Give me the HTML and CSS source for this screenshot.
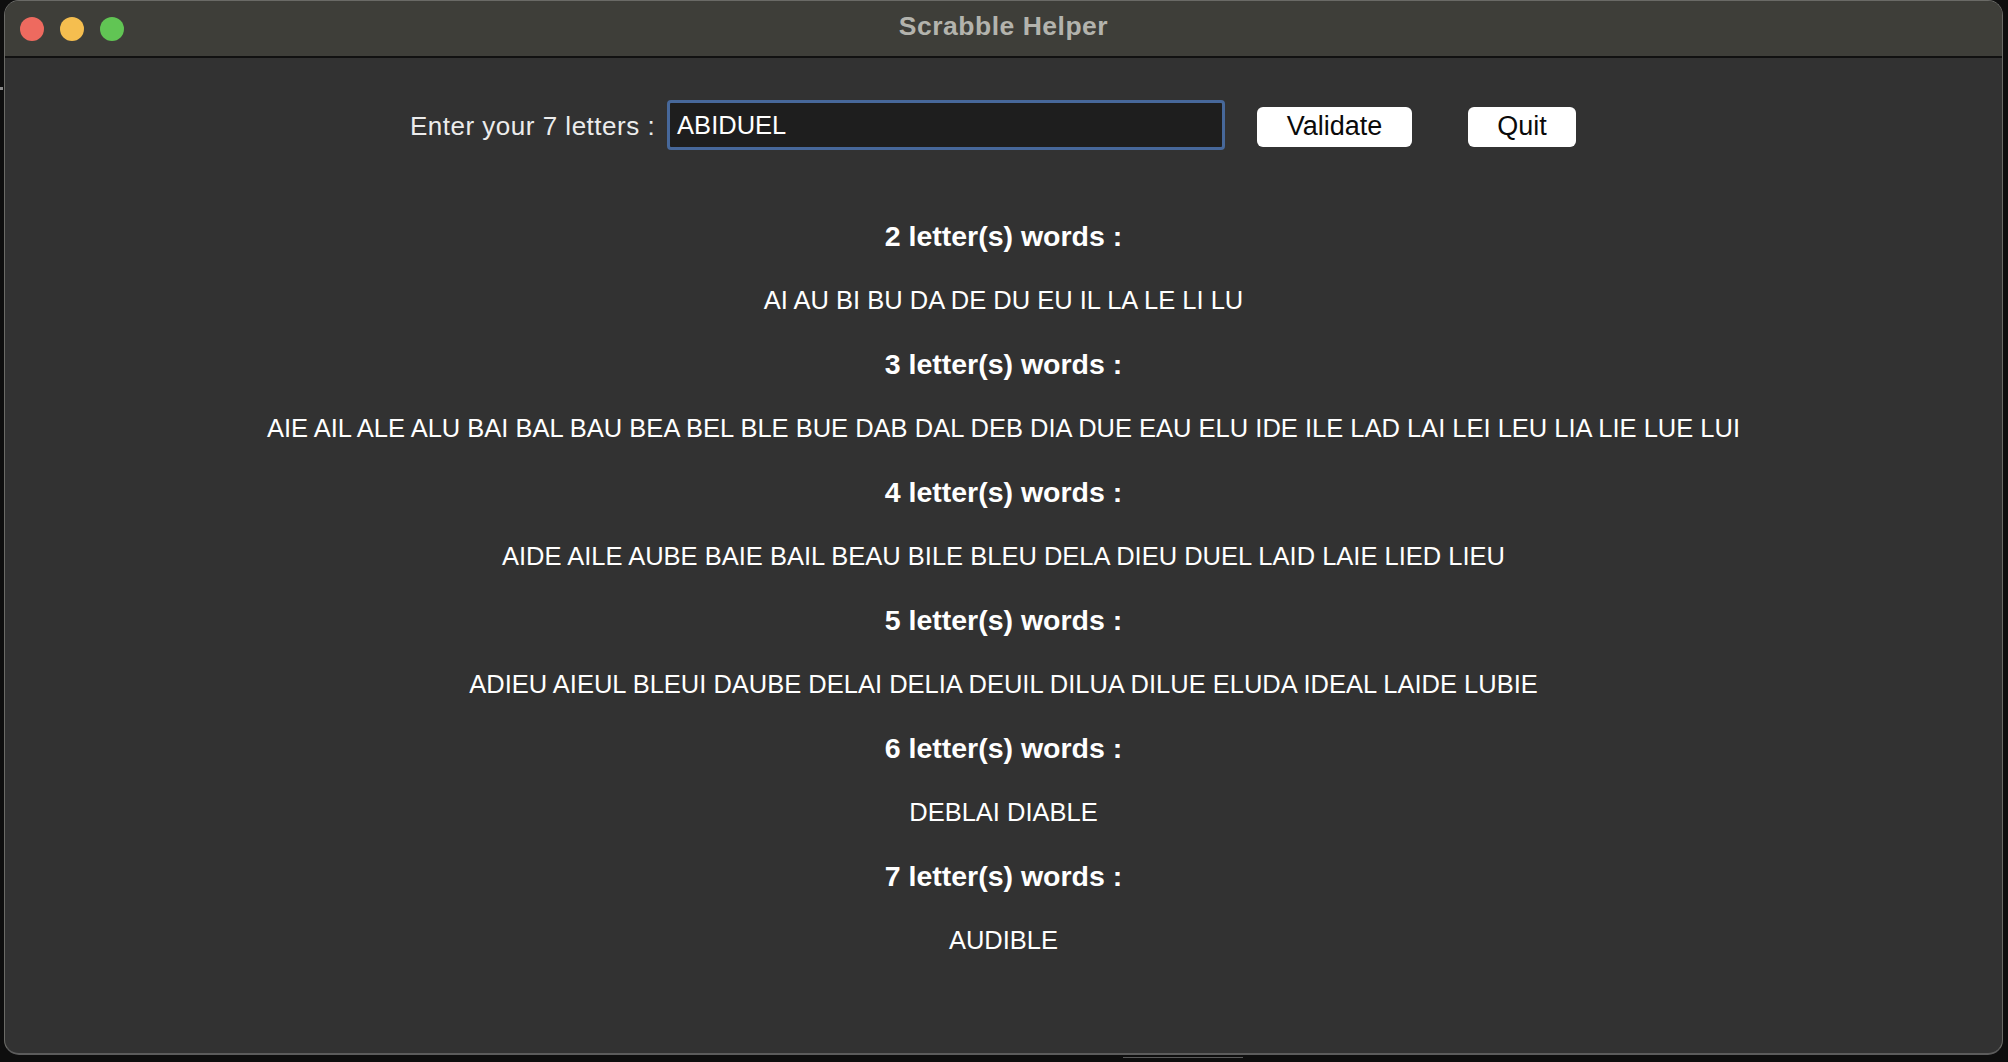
FILE: index.html
```html
<!DOCTYPE html>
<html>
<head>
<meta charset="utf-8">
<title>Scrabble Helper</title>
<link rel="stylesheet" href="styles.css">
</head>
<body>
<div class="desktop">
  <div class="edge-mark"></div>
  <div class="window">
    <div class="titlebar">
      <div class="lights">
        <span class="light red"></span>
        <span class="light yellow"></span>
        <span class="light green"></span>
      </div>
      <div class="title">Scrabble Helper</div>
      <div class="spacer"></div>
    </div>
    <div class="content">
      <div class="entry-row">
        <label class="entry-label">Enter your 7 letters :</label>
        <div class="entry-input">ABIDUEL</div>
        <button class="btn btn-validate">Validate</button>
        <button class="btn btn-quit">Quit</button>
      </div>
      <div class="results">
        <div class="heading">2 letter(s) words :</div>
        <div class="words">AI AU BI BU DA DE DU EU IL LA LE LI LU</div>
        <div class="heading">3 letter(s) words :</div>
        <div class="words">AIE AIL ALE ALU BAI BAL BAU BEA BEL BLE BUE DAB DAL DEB DIA DUE EAU ELU IDE ILE LAD LAI LEI LEU LIA LIE LUE LUI</div>
        <div class="heading">4 letter(s) words :</div>
        <div class="words">AIDE AILE AUBE BAIE BAIL BEAU BILE BLEU DELA DIEU DUEL LAID LAIE LIED LIEU</div>
        <div class="heading">5 letter(s) words :</div>
        <div class="words">ADIEU AIEUL BLEUI DAUBE DELAI DELIA DEUIL DILUA DILUE ELUDA IDEAL LAIDE LUBIE</div>
        <div class="heading">6 letter(s) words :</div>
        <div class="words">DEBLAI DIABLE</div>
        <div class="heading">7 letter(s) words :</div>
        <div class="words">AUDIBLE</div>
      </div>
    </div>
  </div>
  <div class="dock-line"></div>
</div>
</body>
</html>
```

FILE: styles.css
```css
html, body {
  margin: 0;
  padding: 0;
  background: #101010;
}

.desktop {
  position: relative;
  width: 2008px;
  height: 1062px;
  overflow: hidden;
  background: #0e0e0e;
  font-family: "Liberation Sans", Arial, sans-serif;
}

.edge-mark {
  position: absolute;
  left: 0;
  top: 87px;
  width: 3px;
  height: 3px;
  background: #8a8a8a;
}

.window {
  margin-left: 4px;
  width: 1999px;
  height: 1055px;
  box-sizing: border-box;
  border: 1px solid #6a6a66;
  border-bottom: 2px solid #5c5c5c;
  border-radius: 15px;
  background: #323232;
  overflow: hidden;
  display: flex;
  flex-direction: column;
}

.titlebar {
  height: 55px;
  flex: none;
  background: #3e3e39;
  border-bottom: 2px solid #111111;
  display: grid;
  grid-template-columns: 1fr auto 1fr;
  align-items: center;
}

.lights {
  display: flex;
  gap: 16px;
  padding-left: 15px;
}

.light {
  width: 24px;
  height: 24px;
  border-radius: 50%;
  display: block;
}

.red { background: #ee6a5f; }
.yellow { background: #f5be4f; }
.green { background: #61c554; }

.title {
  color: #b3b3ad;
  font-weight: bold;
  font-size: 26.5px;
  letter-spacing: 0.5px;
  padding-bottom: 4px;
}

.content {
  flex: 1;
  padding-top: 42px;
}

.entry-row {
  display: flex;
  align-items: center;
  padding-left: 405px;
  height: 50px;
}

.entry-label {
  color: #ececec;
  font-size: 26px;
  letter-spacing: 0.5px;
  margin-right: 12px;
  padding-top: 3px;
}

.entry-input {
  width: 558px;
  height: 50px;
  box-sizing: border-box;
  border: 3px solid #47689a;
  border-radius: 4px;
  background: #1e1e1e;
  color: #ffffff;
  font-size: 25.5px;
  display: flex;
  align-items: center;
  padding-left: 7px;
  padding-top: 1px;
}

.btn {
  border: none;
  background: #ffffff;
  color: #0a0a0a;
  font-family: "Liberation Sans", Arial, sans-serif;
  font-size: 27px;
  height: 40px;
  border-radius: 6px;
  padding: 0;
  margin-top: 3px;
}

.btn-validate {
  width: 155px;
  margin-left: 32px;
}

.btn-quit {
  width: 108px;
  margin-left: 56px;
}

.results {
  margin-top: 54px;
  display: flex;
  flex-direction: column;
  align-items: center;
}

.heading,
.words {
  height: 64px;
  line-height: 64px;
  color: #ffffff;
  white-space: nowrap;
}

.heading {
  font-weight: bold;
  font-size: 28.5px;
}

.words {
  font-size: 25.5px;
}

.dock-line {
  margin-left: 1123px;
  margin-top: 2px;
  width: 120px;
  height: 1px;
  background: #5a5a5a;
}
```
